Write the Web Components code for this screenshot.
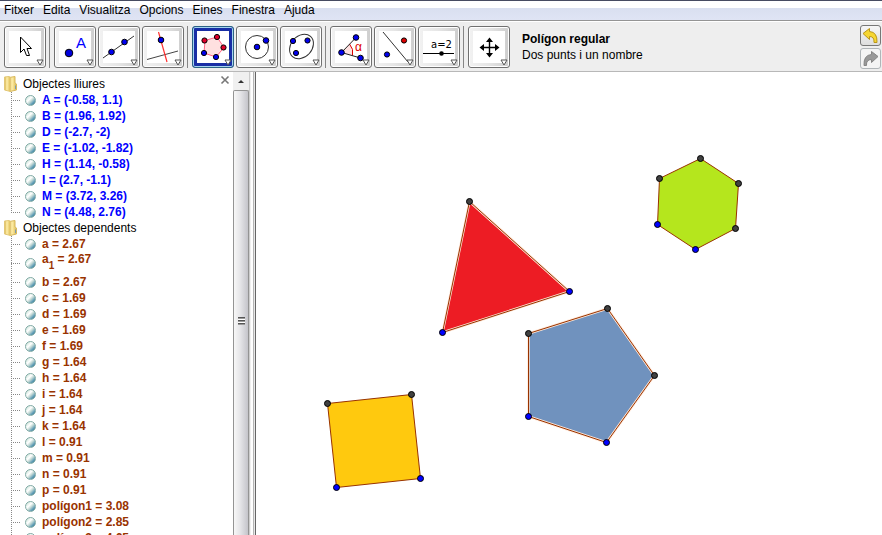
<!DOCTYPE html>
<html lang="ca">
<head>
<meta charset="utf-8">
<title>GeoGebra</title>
<style>
  html, body { margin: 0; height: 100%; }
  body { overflow: hidden; background: #fff; color: #000; font: 12px/16px "Liberation Sans", Arial, sans-serif; }
</style>
</head>
<body>
<geo-app></geo-app>
<script>
const define = (name, html) => customElements.define(name, class extends HTMLElement {
  connectedCallback() {
    if (this.shadowRoot) return;
    const t = document.createElement('template');
    t.innerHTML = typeof html === 'function' ? html(this) : html;
    this.attachShadow({ mode: 'open' }).append(t.content.cloneNode(true));
  }
});

const dot = (x, y, c = '#0000ee', r = 3.4) => `<circle cx="${x}" cy="${y}" r="${r}" fill="${c}" stroke="#000"/>`;
const icons = {
  move: `<path d="M11.500 6v15.500l3.500-3.500 2.500 6.500h3l-2.500-7h4.500z" fill="#fff" stroke="#000"/>`,
  point: `${dot(10, 22, '#0000dd', 3.800)}<text x="17" y="17" fill="#0000ff" font-family="Liberation Sans, Arial, sans-serif" font-size="15">A</text>`,
  line: `<path d="M0 27 31 5" stroke="#333"/>${dot(8.500, 21, '#0000ee', 2.800)}${dot(21.500, 11, '#0000ee', 2.800)}`,
  perpendicular: `<path d="M0 28.500 31 20" stroke="#444"/><path d="M11.500 1 20 31" stroke="#ff3030" stroke-width="1.200"/>${dot(14, 9, '#0000ee', 2.800)}`,
  polygon: `<path d="M20 6 27 16.500 19 26 7 22 8 9.500z" fill="#ffe0e0" stroke="#ff6688"/>${dot(20, 6, '#e0002c', 2.600)}${dot(26.500, 16.500, '#e0002c', 2.600)}${dot(19, 26, '#0000ee', 2.600)}${dot(7, 22, '#0000ee', 2.600)}${dot(7.500, 9.500, '#e0002c', 2.600)}`,
  circle: `<circle cx="16" cy="16" r="11.500" fill="none" stroke="#333"/>${dot(16, 16, '#0000ee', 2.800)}${dot(25, 9.500, '#0000ee', 2.800)}`,
  conic: `<ellipse cx="16.500" cy="15.500" rx="13.500" ry="10.500" transform="rotate(-48 16.500 15.500)" fill="none" stroke="#333"/>${dot(8, 10, '#0000ee', 2.600)}${dot(22.500, 9.500, '#0000ee', 2.600)}${dot(11, 22, '#0000ee', 2.600)}`,
  angle: `<path d="M6.500 21.500 14.500 13Q19 18 17.500 24.500z" fill="#ffe0e0"/><path d="M14.500 13Q19 18 17.500 24.500" fill="none" stroke="#dd0000"/><path d="M21 6.500 6.500 21.500 25.500 27" fill="none" stroke="#222"/>${dot(21, 6.500, '#0000ee', 2.800)}${dot(6.500, 21.500, '#0000ee', 2.800)}${dot(25.500, 27, '#0000ee', 2.800)}<text x="20" y="20" fill="#dd0000" font-family="Liberation Sans, Arial, sans-serif" font-size="12">α</text>`,
  reflect: `<path d="M4 1 29 31" stroke="#333"/>${dot(25, 9.500, '#dd0000', 2.600)}${dot(8, 23.500, '#0000ee', 2.600)}`,
  slider: `<path d="M0 22.500H31" stroke="#000"/><circle cx="18.500" cy="22.500" r="2.300"/><text x="8" y="17" font-family="DejaVu Sans, sans-serif" font-size="10">a=2</text>`,
  pan: `<path d="M9 16.500h15M16.500 9v15" stroke="#000" stroke-width="1.400"/><path d="M6.500 16.500l4.500-3.500v7zM26.500 16.500l-4.500-3.500v7zM16.500 6.500l-3.500 4.500h7zM16.500 26.500l-3.500-4.500h7z"/>`
};

define('geo-menu', `
<style>
  :host { display: flex; height: 21px; box-sizing: border-box; border-top: 1px solid #464b61; border-bottom: 1px solid #949494; background: linear-gradient(#fff 0 35%, #d9dff0 36%, #dfe4f4 95%); }
  nav { display: flex; align-items: center; gap: 1px; }
  button { border: 0; margin: 0; padding: 0 4px; background: none; color: inherit; font: inherit; line-height: 19px; }
</style>
<nav aria-label="Menú principal"><button>Fitxer</button><button>Edita</button><button>Visualitza</button><button>Opcions</button><button>Eines</button><button>Finestra</button><button>Ajuda</button></nav>`);

define('geo-tool', el => `
<style>
  :host { display: block; }
  button { display: flex; align-items: center; justify-content: center; box-sizing: border-box; width: 42px; height: 42px; padding: 0; border: 1px solid #707070; border-radius: 3px; background: linear-gradient(90deg, #f2f2f2, #e6e6e6 48%, #cdcdcd); position: relative; box-shadow: inset 0 0 0 1px #fff; }
  button[aria-pressed=true] { border: 1px solid #2c6284; background: #192ea5; box-shadow: inset 0 0 0 1px #a5d5ee; }
  .icon { width: 32px; height: 32px; background: #fff; }
  .more { position: absolute; right: 1px; bottom: 1px; }
</style>
<button aria-label="${el.getAttribute('label')}" aria-pressed="${el.hasAttribute('selected')}">
  <svg class="icon" viewBox="0 0 32 32" fill="none"><g fill="#000">${icons[el.getAttribute('icon')]}</g></svg>
  <svg class="more" width="8" height="7"><path d="M1 1h6L4 6z" fill="#fff" stroke="#555"/></svg>
</button>`);

define('geo-history', el => `
<style>
  :host { display: block; }
  button { display: block; box-sizing: border-box; width: 21px; height: 21px; padding: 1px; border: 1px solid #777; border-radius: 3px; background: linear-gradient(#f6f6f6, #dedede); }
  button:disabled { border-color: #b0b5b8; background: #f4f4f4; }
  svg { display: block; }
</style>
<button aria-label="${el.getAttribute('label')}" ${el.hasAttribute('redo') ? 'disabled' : ''}>
  <svg width="17" height="17" viewBox="0 0 17 17">${el.hasAttribute('redo')
    ? '<path d="M16 6.500 9.500 1.500v3Q1.500 5 2 15.500h2.500Q4 9.500 9.500 9.500v3z" fill="#999" stroke="#858585"/>'
    : '<path d="M1 6.500 7.500 1.500v3Q15.500 5 15 15.500H12Q12.500 9.500 7.500 9.500v3z" fill="#f6d632" stroke="#ba9618"/>'}</svg>
</button>`);

define('geo-toolbar', `
<style>
  :host { display: flex; align-items: center; height: 51px; box-sizing: border-box; padding: 0 0 0 4px; border-top: 1px solid #fff; border-bottom: 1px solid #b8b8b8; background: #eee; }
  .tools, .group { display: flex; gap: 2px; }
  .tools { gap: 0; }
  .group + .group { margin-left: 3px; padding-left: 4px; border-left: 1px solid #858585; }
  .help { flex: 1; margin-left: 12px; }
  .help strong, .help span { display: block; }
  .history { display: grid; gap: 2px; margin-right: 1px; }
</style>
<div class="tools">
  <div class="group"><geo-tool icon="move" label="Desplaça"></geo-tool></div>
  <div class="group"><geo-tool icon="point" label="Nou punt"></geo-tool><geo-tool icon="line" label="Recta per dos punts"></geo-tool><geo-tool icon="perpendicular" label="Recta perpendicular"></geo-tool></div>
  <div class="group"><geo-tool icon="polygon" label="Polígon regular" selected></geo-tool><geo-tool icon="circle" label="Circumferència"></geo-tool><geo-tool icon="conic" label="Cònica"></geo-tool></div>
  <div class="group"><geo-tool icon="angle" label="Angle"></geo-tool><geo-tool icon="reflect" label="Simetria axial"></geo-tool><geo-tool icon="slider" label="Punt lliscant"></geo-tool></div>
  <div class="group"><geo-tool icon="pan" label="Desplaça la vista"></geo-tool></div>
</div>
<div class="help"><strong>Polígon regular</strong><span>Dos punts i un nombre</span></div>
<div class="history"><geo-history label="Desfés"></geo-history><geo-history label="Refés" redo></geo-history></div>`);

define('geo-object', `
<style>
  :host { display: flex; align-items: center; height: 16px; margin-left: 11px; color: #993300; font-weight: bold; background: repeating-linear-gradient(#888 0 1px, transparent 1px 2px) 0 0 / 1px 100% no-repeat; }
  :host([free]) { color: #0000ff; }
  :host([last]) { background-size: 1px 8px; }
  :host([tall]) { height: 22px; }
  .branch { width: 9px; height: 1px; background: repeating-linear-gradient(90deg, #888 0 1px, transparent 1px 2px); }
  button { width: 11px; height: 11px; margin: 0 6px 0 5px; padding: 0; border: 1px solid #7fa9a4; border-radius: 50%; background: linear-gradient(135deg, #d9ebe3 15%, #fff 38%, #c6dad6 55%, #5c9ab4 78%, #20668e); }
  :host([tall]) .text { padding-bottom: 8px; }
</style>
<span class="branch"></span><button aria-label="Mostra o amaga"></button><span class="text"><slot></slot></span>`);

define('geo-folder', el => `
<style>
  :host { display: block; }
  header { display: flex; align-items: center; height: 16px; gap: 5px; padding-left: 4px; }
  svg { display: block; width: 14px; height: 16px; }
</style>
<header><svg viewBox="0 0 14 16"><defs><linearGradient id="g"><stop stop-color="#d3ad45"/><stop offset=".4" stop-color="#ffefaa"/><stop offset="1" stop-color="#dcb94e"/></linearGradient></defs><path d="M5 1.500 11 .5v6.500l1.500 1v6L6 15.500z" fill="url(#g)" stroke="#d8b85c"/><path d="M.5 1 5 .5l1.500 1v14L.5 14z" fill="url(#g)" stroke="#e2c777"/><path d="M11.500 9.500v3.500" stroke="#7b9bae"/></svg><span>${el.getAttribute('label')}</span></header>
<slot></slot>`);

const free = ['A = (-0.58, 1.1)', 'B = (1.96, 1.92)', 'D = (-2.7, -2)', 'E = (-1.02, -1.82)', 'H = (1.14, -0.58)', 'I = (2.7, -1.1)', 'M = (3.72, 3.26)', 'N = (4.48, 2.76)'];
const dependent = ['a = 2.67', 'a<sub>1</sub> = 2.67', 'b = 2.67', 'c = 1.69', 'd = 1.69', 'e = 1.69', 'f = 1.69', 'g = 1.64', 'h = 1.64', 'i = 1.64', 'j = 1.64', 'k = 1.64', 'l = 0.91', 'm = 0.91', 'n = 0.91', 'p = 0.91', 'polígon1 = 3.08', 'polígon2 = 2.85', 'polígon3 = 4.65'];

define('geo-algebra', `
<style>
  :host { display: grid; grid-template-columns: 1fr 16px; min-height: 0; overflow: hidden; background: #fff; }
  .tree { position: relative; min-height: 0; overflow: hidden; padding-top: 4px; }
  .close { position: absolute; top: 3px; right: 3px; width: 10px; height: 10px; padding: 0; border: 0; background: none; }
  .close svg, .up svg { display: block; }
  sub { font-size: 10px; line-height: 0; vertical-align: -6px; }
  .bar { display: grid; grid-template-rows: 18px 1fr; min-height: 0; background: #f0f0f0; }
  .up { padding: 0; border: 0; background: #f0f0f0; display: grid; place-items: center; }
  .thumb { display: grid; place-content: center; border: 1px solid #949494; border-bottom: 0; border-radius: 2px 2px 0 0; background: linear-gradient(90deg, #f7f7f7, #e5e5e8 45%, #c4c4ca); margin-bottom: -16px; }
  .grip { width: 7px; height: 8px; background: repeating-linear-gradient(#555 0 1px, #999 1px 2px, #fff 2px 3px); }
</style>
<div class="tree">
  <geo-folder label="Objectes lliures">${free.map((t, i) => `<geo-object free ${i === free.length - 1 ? 'last' : ''}>${t}</geo-object>`).join('')}</geo-folder>
  <geo-folder label="Objectes dependents">${dependent.map(t => `<geo-object ${t.includes('<sub>') ? 'tall' : ''}>${t}</geo-object>`).join('')}</geo-folder>
  <button class="close" aria-label="Tanca"><svg width="10" height="10"><path d="M1.500 1.500l7 7M8.500 1.500l-7 7" stroke="#777" stroke-width="1.600"/></svg></button>
</div>
<div class="bar"><button class="up" aria-label="Amunt"><svg width="6" height="3"><path d="M0 3 3 0l3 3z" fill="#333"/></svg></button><div class="thumb"><div class="grip"></div></div></div>`);

const shapes = [
  { fill: '#ed1c24', p: [[469.5, 201.5], [569.5, 291.5], [442.5, 332.5]], blue: [1, 2], inner: true },
  { fill: '#ffc90e', p: [[327.5, 403.5], [411.5, 394.5], [420.5, 478.5], [336.5, 487.5]], blue: [2, 3] },
  { fill: '#7092be', p: [[528.5, 333.5], [607.5, 308.5], [654.5, 375.5], [606.5, 442.5], [528.5, 416.5]], blue: [3, 4], inner: true },
  { fill: '#b5e61d', p: [[659.5, 178.5], [700.5, 158.5], [738.5, 183.5], [735.5, 228.5], [695.5, 249.5], [657.5, 224.5]], blue: [4, 5] }
];
define('geo-canvas', `
<style>
  :host { display: block; min-width: 0; min-height: 0; overflow: hidden; background: #fff; }
  svg { display: block; width: 100%; height: 100%; }
</style>
<svg role="img" aria-label="Polígons regulars"><g transform="translate(-256 -72)">${shapes.map(s => {
  const pts = s.p.map(q => q.join()).join(' ');
  return `<polygon points="${pts}" fill="${s.fill}" ${s.inner ? 'stroke="#ffe8d8" stroke-width="2.400"' : ''} stroke-linejoin="round"/><polygon points="${pts}" fill="none" stroke="#993300"/>` +
    s.p.map((q, i) => dot(q[0], q[1], s.blue.includes(i) ? '#0000ff' : '#404040', 3)).join('');
}).join('')}</g></svg>`);

define('geo-app', `
<style>
  :host { display: grid; grid-template-rows: auto auto minmax(0, 1fr); height: 100vh; }
  main { display: grid; grid-template-columns: 249px 7px minmax(0, 1fr); min-height: 0; }
  .divider { box-sizing: border-box; border-left: 1px solid #ccc; border-right: 1px solid #666; background: linear-gradient(90deg, #f0f0f0 0 1px, #fff 1px 3px, #b5b5b5 3px 4px, #e8e8e8 4px); }
</style>
<geo-menu></geo-menu>
<geo-toolbar></geo-toolbar>
<main><geo-algebra></geo-algebra><div class="divider" role="separator" aria-orientation="vertical"></div><geo-canvas></geo-canvas></main>`);
</script>
</body>
</html>
